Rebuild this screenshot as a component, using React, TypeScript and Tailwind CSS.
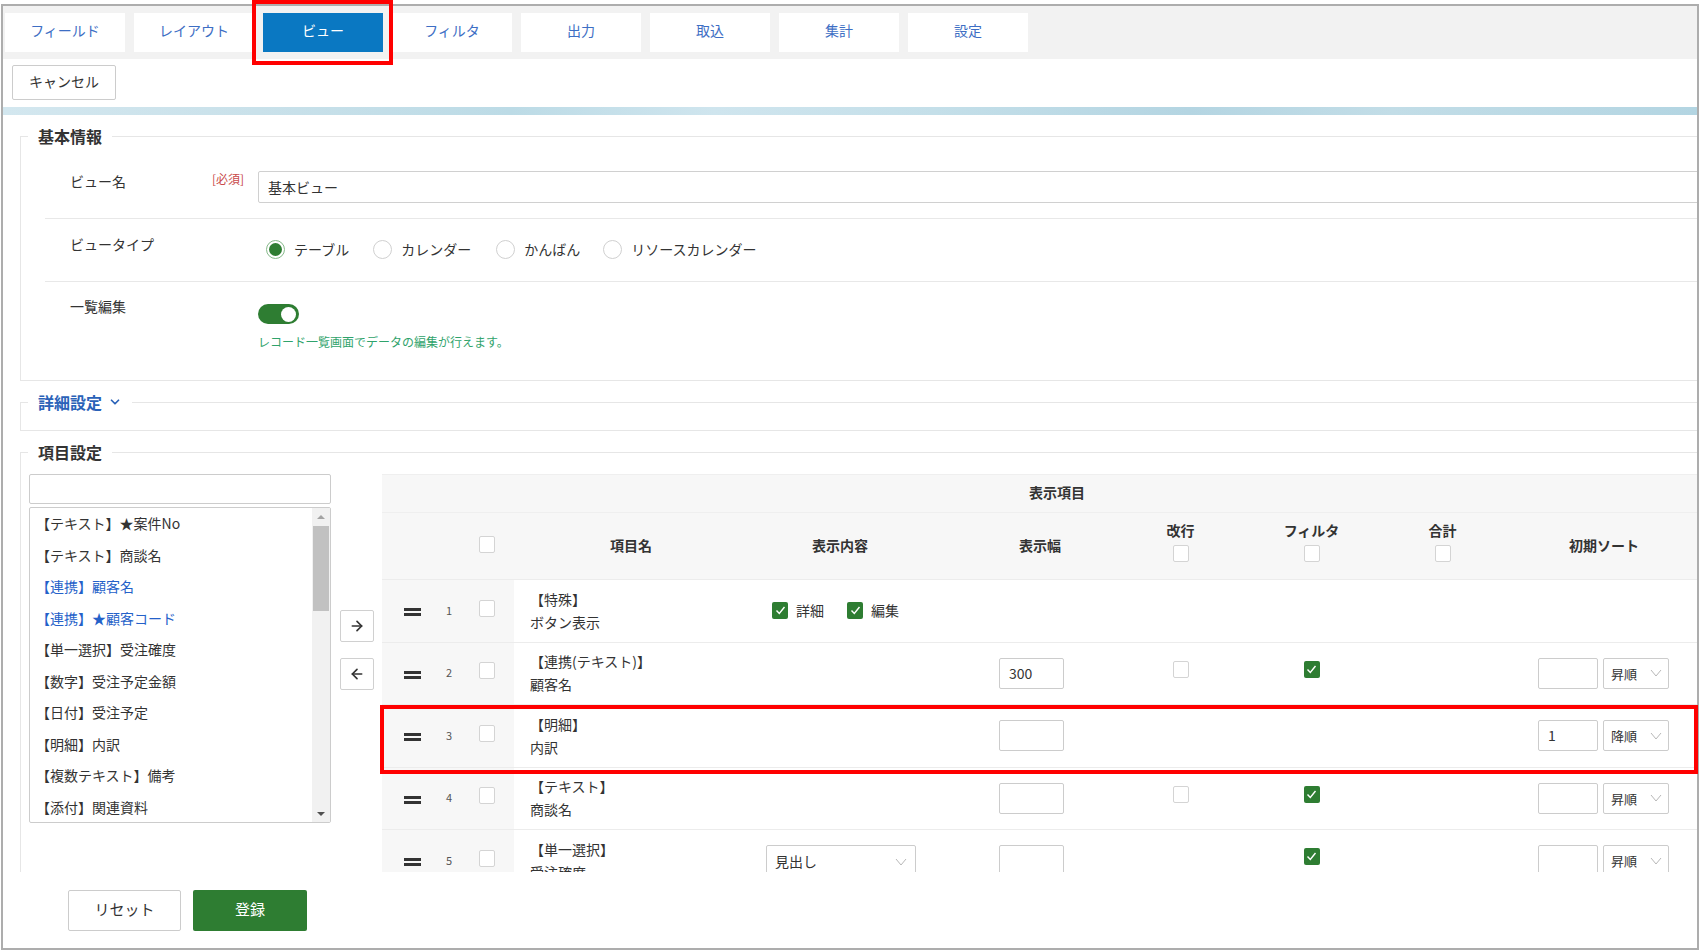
import { ArrowLeft, ArrowRight, ChevronDown } from "lucide-react";

const tabs = ["フィールド", "レイアウト", "ビュー", "フィルタ", "出力", "取込", "集計", "設定"];

const fields = [
	{ label: "【テキスト】★案件No", linked: false },
	{ label: "【テキスト】商談名", linked: false },
	{ label: "【連携】顧客名", linked: true },
	{ label: "【連携】★顧客コード", linked: true },
	{ label: "【単一選択】受注確度", linked: false },
	{ label: "【数字】受注予定金額", linked: false },
	{ label: "【日付】受注予定", linked: false },
	{ label: "【明細】内訳", linked: false },
	{ label: "【複数テキスト】備考", linked: false },
	{ label: "【添付】関連資料", linked: false },
];

type Row = {
	no: number;
	type: string;
	name: string;
	disp?: "checks" | "select";
	width?: string;
	kaigyo?: boolean;
	filter?: boolean;
	sort?: { value: string; order: string };
};

const rows: Row[] = [
	{ no: 1, type: "【特殊】", name: "ボタン表示", disp: "checks" },
	{ no: 2, type: "【連携(テキスト)】", name: "顧客名", width: "300", kaigyo: true, filter: true, sort: { value: "", order: "昇順" } },
	{ no: 3, type: "【明細】", name: "内訳", width: "", sort: { value: "1", order: "降順" } },
	{ no: 4, type: "【テキスト】", name: "商談名", width: "", kaigyo: true, filter: true, sort: { value: "", order: "昇順" } },
	{ no: 5, type: "【単一選択】", name: "受注確度", disp: "select", width: "", filter: true, sort: { value: "", order: "昇順" } },
];

const cols = "grid grid-cols-[48px_38px_46px_234px_184px_183px_131px_131px_131px_224px]";

const Checkbox = ({ checked = false }: { checked?: boolean }) =>
	checked ? (
		<div className="w-[16px] h-[17px] rounded-[2px] bg-[#2e7d32] flex items-center justify-center">
			<svg width="11" height="11" viewBox="0 0 11 11">
				<polyline points="1.5,5.5 4.3,8.5 9.5,2" fill="none" stroke="white" strokeWidth="1.4" />
			</svg>
		</div>
	) : (
		<div className="w-[16px] h-[17px] rounded-[2px] bg-white border border-[#d4d4d4]" />
	);

const Radio = ({ checked = false }: { checked?: boolean }) => (
	<div
		className={`w-[19px] h-[19px] rounded-full bg-white border flex items-center justify-center ${
			checked ? "border-[#86b98a]" : "border-[#d0d0d0]"
		}`}
	>
		{checked && <div className="w-[13px] h-[13px] rounded-full bg-[#2e7d32]" />}
	</div>
);

const SmallChevron = () => (
	<svg width="12" height="8" viewBox="0 0 12 8">
		<polyline points="1,1 6,7 11,1" fill="none" stroke="#b8b8b8" strokeWidth="1" />
	</svg>
);

const Handle = () => (
	<div className="flex flex-col gap-[2px]">
		<div className="w-[17px] h-[3px] bg-[#333]" />
		<div className="w-[17px] h-[3px] bg-[#333]" />
	</div>
);

const BodyRow = ({ row }: { row: Row }) => (
	<div className={`${cols} h-[62.5px] border-b border-[#ececec] text-[14px] text-[#333]`}>
		<div className="bg-[#f7f7f7] flex items-center pl-[22px] pt-[3px]">
			<Handle />
		</div>
		<div className="bg-[#f7f7f7] flex items-center justify-center text-[11px] text-[#555] pb-[2px]">{row.no}</div>
		<div className="bg-[#f7f7f7] flex items-center pl-[11px] pb-[5px]">
			<Checkbox />
		</div>
		<div className="flex flex-col justify-center pl-[16px] leading-[23px]">
			<span>{row.type}</span>
			<span>{row.name}</span>
		</div>
		<div className="flex items-center">
			{row.disp === "checks" && (
				<div className="flex items-center pl-[24px]">
					<Checkbox checked />
					<span className="ml-[8px]">詳細</span>
					<div className="ml-[23px]">
						<Checkbox checked />
					</div>
					<span className="ml-[8px]">編集</span>
				</div>
			)}
			{row.disp === "select" && (
				<div className="ml-[18px] mt-[2px] w-[150px] h-[34px] border border-[#ccc] rounded-[2px] flex items-center justify-between pl-[8px] pr-[8px]">
					<span>見出し</span>
					<SmallChevron />
				</div>
			)}
		</div>
		<div className="flex items-center">
			{row.width !== undefined && (
				<div className="ml-[67px] w-[65px] h-[31px] border border-[#ccc] rounded-[2px] flex items-center pl-[9px]">{row.width}</div>
			)}
		</div>
		<div className="flex items-center justify-center pb-[8px]">{row.kaigyo && <Checkbox />}</div>
		<div className="flex items-center justify-center pb-[8px]">{row.filter && <Checkbox checked />}</div>
		<div />
		<div className="flex items-center pl-[30px]">
			{row.sort && (
				<>
					<div className="w-[60px] h-[31px] border border-[#ccc] rounded-[2px] flex items-center pl-[9px]">{row.sort.value}</div>
					<div className="ml-[5px] w-[66px] h-[31px] border border-[#ccc] rounded-[2px] flex items-center justify-between pl-[7px] pr-[6px] text-[13px]">
						<span>{row.sort.order}</span>
						<SmallChevron />
					</div>
				</>
			)}
		</div>
	</div>
);

const App = () => {
	return (
		<div className="relative w-[1700px] h-[951px] bg-white overflow-hidden pt-[4px] pl-[1px] font-['Noto_Sans_CJK_JP','Liberation_Sans',sans-serif] text-[#333]">
			<div className="w-[1698px] h-[946px] border-2 border-[#adadad] flex flex-col overflow-hidden">
				{/* tabs */}
				<div className="h-[53px] shrink-0 bg-[#f2f2f2] flex items-start pt-[7px] pl-[2px] gap-[9px]">
					{tabs.map((tab) => (
						<div
							key={tab}
							className={`w-[120px] h-[39px] pb-[5px] flex items-center justify-center text-[14px] ${
								tab === "ビュー" ? "bg-[#0a78c2] text-white" : "bg-white text-[#3d6ec4]"
							}`}
						>
							{tab}
						</div>
					))}
				</div>

				<div className="h-[48px] shrink-0 pt-[6px] pl-[9px]">
					<div className="w-[104px] h-[35px] pb-[3px] border border-[#ccc] rounded-[2px] flex items-center justify-center text-[14px]">
						キャンセル
					</div>
				</div>

				<div className="h-[8px] shrink-0 bg-[linear-gradient(90deg,#d3e7ef_0%,#c9e1ea_15%,#bcdbe6_30%,#cfe5ee_42%,#c4dfe9_55%,#b4d5e2_70%,#c2dde7_82%,#b3d5e2_100%)]" />

				{/* scroll area */}
				<div className="h-[757px] shrink-0 overflow-hidden pl-[17px]">
					<fieldset className="mt-[9px] w-[1720px] border border-[#e6e6e6]">
						<legend className="ml-[7px] px-[10px] text-[16px] leading-[24px] font-bold">基本情報</legend>
						<div className="ml-[24px]">
							<div className="flex h-[71px] border-b border-[#e8e8e8]">
								<div className="w-[167px] pl-[25px] pt-[23px] text-[14px] leading-[20px]">ビュー名</div>
								<div className="w-[46px] pt-[22px] text-[12px] leading-[18px] text-[#c94a4a]">[必須]</div>
								<div className="flex-1 pt-[23px]">
									<div className="h-[32px] border border-[#d0d0d0] rounded-[2px] flex items-center pl-[9px] text-[14px]">基本ビュー</div>
								</div>
							</div>
							<div className="flex h-[63px] border-b border-[#e8e8e8]">
								<div className="w-[213px] pl-[25px] pt-[15px] text-[14px] leading-[20px]">ビュータイプ</div>
								<div className="pt-[21px] pl-[8px] flex items-start text-[14px] leading-[20px]">
									<Radio checked />
									<span className="ml-[9px] -mt-[1px]">テーブル</span>
									<div className="ml-[24px]">
										<Radio />
									</div>
									<span className="ml-[9px] -mt-[1px]">カレンダー</span>
									<div className="ml-[25px]">
										<Radio />
									</div>
									<span className="ml-[9px] -mt-[1px]">かんばん</span>
									<div className="ml-[23px]">
										<Radio />
									</div>
									<span className="ml-[9px] -mt-[1px]">リソースカレンダー</span>
								</div>
							</div>
							<div className="flex h-[98px]">
								<div className="w-[213px] pl-[25px] pt-[14px] text-[14px] leading-[20px]">一覧編集</div>
								<div className="pt-[22px]">
									<div className="w-[41px] h-[20px] rounded-full bg-[#2e7d32] flex items-center justify-end pr-[3px]">
										<div className="w-[15px] h-[15px] rounded-full bg-white" />
									</div>
									<div className="mt-[9px] text-[12px] leading-[18px] text-[#2fa36b]">
										レコード一覧画面でデータの編集が行えます。
									</div>
								</div>
							</div>
						</div>
					</fieldset>

					<fieldset className="mt-[9px] w-[1720px] border border-[#e6e6e6] h-[41px]">
						<legend className="ml-[7px] px-[10px] text-[16px] leading-[24px] font-bold text-[#2a62b8] flex items-center">
							詳細設定
							<ChevronDown size={14} strokeWidth={3} className="ml-[6px]" />
						</legend>
					</fieldset>

					<fieldset className="mt-[9px] w-[1720px] border border-[#e6e6e6]">
						<legend className="ml-[7px] px-[10px] text-[16px] leading-[24px] font-bold">項目設定</legend>
						<div className="flex items-start pt-[10px] pl-[8px]">
							<div className="w-[302px] shrink-0">
								<div className="h-[30px] border border-[#ccc] rounded-[2px] bg-white" />
								<div className="mt-[3px] h-[316px] border border-[#ccc] rounded-[2px] flex">
									<div className="flex-1 pl-[6px] text-[14px]">
										{fields.map((f) => (
											<div
												key={f.label}
												className={`h-[31.5px] leading-[30px] ${f.linked ? "text-[#2461c9]" : "text-[#333]"}`}
											>
												{f.label}
											</div>
										))}
									</div>
									<div className="w-[18px] bg-[#f1f1f1] flex flex-col">
										<div className="h-[17px] flex items-center justify-center">
											<div className="w-0 h-0 border-x-[4px] border-x-transparent border-b-[4px] border-b-[#a3a3a3]" />
										</div>
										<div className="mx-[1px] mt-[1px] h-[85px] bg-[#c1c1c1]" />
										<div className="flex-1" />
										<div className="h-[17px] flex items-center justify-center">
											<div className="w-0 h-0 border-x-[4px] border-x-transparent border-t-[4px] border-t-[#505050]" />
										</div>
									</div>
								</div>
							</div>

							<div className="w-[51px] shrink-0 pl-[9px]">
								<div className="mt-[136px] w-[34px] h-[32px] border border-[#d0d0d0] rounded-[2px] flex items-center justify-center">
									<ArrowRight size={16} strokeWidth={2.5} color="#333" />
								</div>
								<div className="mt-[16px] w-[34px] h-[32px] border border-[#d0d0d0] rounded-[2px] flex items-center justify-center">
									<ArrowLeft size={16} strokeWidth={2.5} color="#333" />
								</div>
							</div>

							<div className="w-[1350px] shrink-0">
								<div className="h-[39px] pb-[2px] bg-[#f7f7f7] border-y border-[#efefef] flex items-center justify-center text-[14px] font-bold">
									表示項目
								</div>
								<div className={`${cols} h-[67px] bg-[#f7f7f7] border-b border-[#ececec] text-[14px] font-bold`}>
									<div />
									<div />
									<div className="flex items-center pl-[11px] pb-[4px]">
										<Checkbox />
									</div>
									<div className="flex items-center justify-center pb-[2px]">項目名</div>
									<div className="flex items-center justify-center pb-[2px]">表示内容</div>
									<div className="flex items-center pl-[87px] pb-[2px]">表示幅</div>
									{["改行", "フィルタ", "合計"].map((h) => (
										<div key={h} className="flex flex-col items-center pt-[7px]">
											<span className="leading-[20px]">{h}</span>
											<div className="mt-[5px]">
												<Checkbox />
											</div>
										</div>
									))}
									<div className="flex items-center pl-[61px] pb-[2px]">初期ソート</div>
								</div>
								{rows.map((row) => (
									<BodyRow key={row.no} row={row} />
								))}
							</div>
						</div>
					</fieldset>
				</div>

				{/* footer */}
				<div className="flex pt-[18px] pl-[65px]">
					<div className="w-[113px] h-[41px] pb-[2px] border border-[#ccc] rounded-[2px] flex items-center justify-center text-[15px]">
						リセット
					</div>
					<div className="ml-[12px] w-[114px] h-[41px] pb-[2px] bg-[#2e7d32] rounded-[2px] flex items-center justify-center text-[15px] text-white">
						登録
					</div>
				</div>
			</div>

			{/* annotations */}
			<div className="absolute left-[252px] top-0 w-[141px] h-[65px] border-4 border-[#f00]" />
			<div className="absolute left-[380px] top-[705px] w-[1318px] h-[69px] border-4 border-[#f00]" />
		</div>
	);
};

export default App;
